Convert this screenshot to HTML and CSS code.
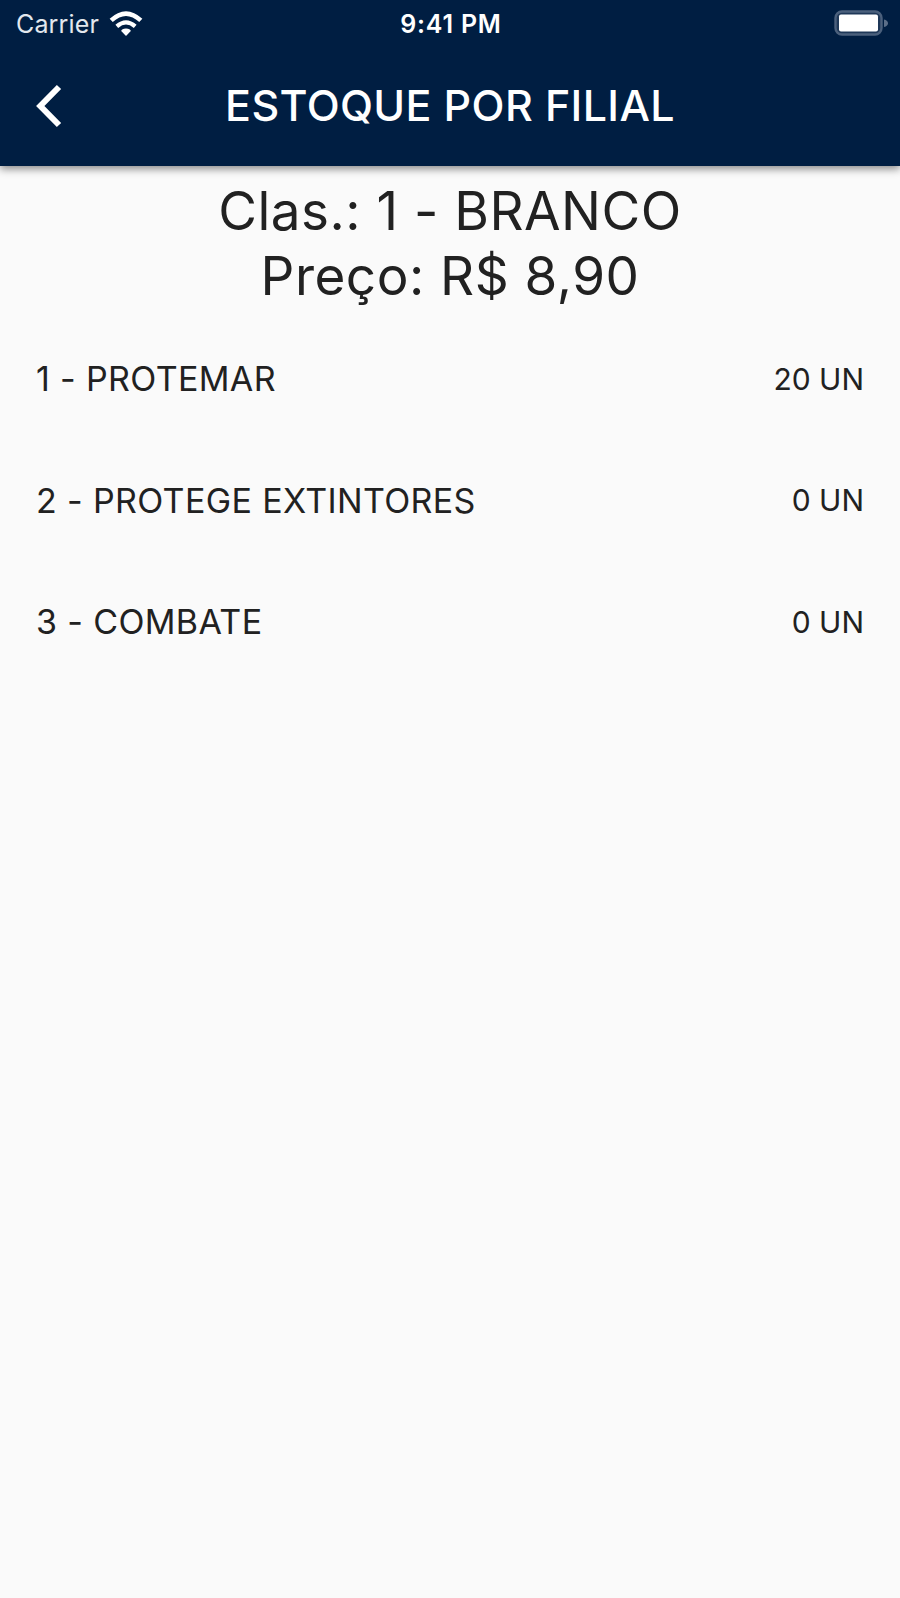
FILE: index.html
```html
<!DOCTYPE html>
<html lang="pt-BR">
<head>
  <meta charset="UTF-8">
  <meta name="viewport" content="width=device-width, initial-scale=1.0">
  <title>Estoque por filial</title>
  <link rel="stylesheet" href="styles.css">
</head>
<body>
  <header class="header">
    <div class="status-bar">
      <div class="carrier">
        <span>Carrier</span>
        <svg class="wifi" viewBox="0 0 34 25" width="34" height="25">
          <path d="M17 25 L12.2 20 Q12.6 17.6 17 17.4 Q21.4 17.6 21.8 20 Z" fill="#fff"/>
          <path d="M7.8 15.4 Q17 7.4 26.2 15.4" fill="none" stroke="#fff" stroke-width="4.2"/>
          <path d="M2.2 9.4 Q17 -4.2 31.8 9.4" fill="none" stroke="#fff" stroke-width="4.6"/>
        </svg>
      </div>
      <div class="clock">9:41 PM</div>
      <svg class="battery" viewBox="0 0 54 26" width="54" height="26">
        <rect x="1.5" y="1.5" width="46" height="23" rx="6.5" fill="#1f3858" stroke="#4b607c" stroke-width="2.4"/>
        <rect x="5" y="4.5" width="39" height="17" rx="2" fill="#fff"/>
        <path d="M50 9.5 Q54 10.5 54 13.2 Q54 16 50 17 Z" fill="#5b6e88"/>
      </svg>
    </div>
    <div class="app-bar">
      <svg class="back" viewBox="0 0 26 44" width="26" height="44">
        <path d="M23 3 L4.3 22 L23 41" fill="none" stroke="#fff" stroke-width="6"/>
      </svg>
      <h1>ESTOQUE POR FILIAL</h1>
    </div>
  </header>

  <main>
    <div class="product">
      <div class="product-class">Clas.: 1 - BRANCO</div>
      <div class="product-price">Preço: R$ 8,90</div>
    </div>
    <ul class="branches">
      <li><span>1 - PROTEMAR</span><span class="qty">20 UN</span></li>
      <li><span>2 - PROTEGE EXTINTORES</span><span class="qty">0 UN</span></li>
      <li><span>3 - COMBATE</span><span class="qty">0 UN</span></li>
    </ul>
  </main>
</body>
</html>
```
FILE: styles.css
```css
body {
  margin: 0;
  background: #fafafa;
  color: #212121;
  font-family: Inter, 'Liberation Sans', sans-serif;
}

.header {
  height: 166px;
  background: #001e42;
  color: #fff;
  box-shadow: 0 3px 8px rgba(0, 0, 0, 0.45);
}

.status-bar {
  display: grid;
  grid-template-columns: 1fr auto 1fr;
  align-items: center;
  height: 48px;
  padding: 0 12px 0 16px;
  font-size: 25px;
}

.carrier {
  display: flex;
  align-items: center;
  gap: 10px;
  color: #e3e8ee;
  letter-spacing: 0.15px;
}

.wifi {
  margin-bottom: 2px;
}

.clock {
  margin-right: 2px;
  font-weight: 600;
  letter-spacing: 0.8px;
}

.battery {
  justify-self: end;
  margin-bottom: 2px;
}

.app-bar {
  display: grid;
  grid-template-columns: 26px 1fr 26px;
  align-items: center;
  height: 116px;
  padding: 0 36px;
}

h1 {
  margin: 0 0 2px;
  text-align: center;
  font-size: 43px;
  font-weight: 500;
  letter-spacing: 0.35px;
}

.product {
  padding-top: 13px;
  text-align: center;
  font-size: 53px;
  line-height: 65px;
  letter-spacing: 0.5px;
}

.branches {
  margin: 0;
  padding: 9px 36px;
  list-style: none;
}

.branches li {
  display: flex;
  align-items: center;
  justify-content: space-between;
  height: 121.5px;
  font-size: 34px;
  letter-spacing: 0.36px;
}

.branches .qty {
  font-size: 30px;
  letter-spacing: 0;
}
```
